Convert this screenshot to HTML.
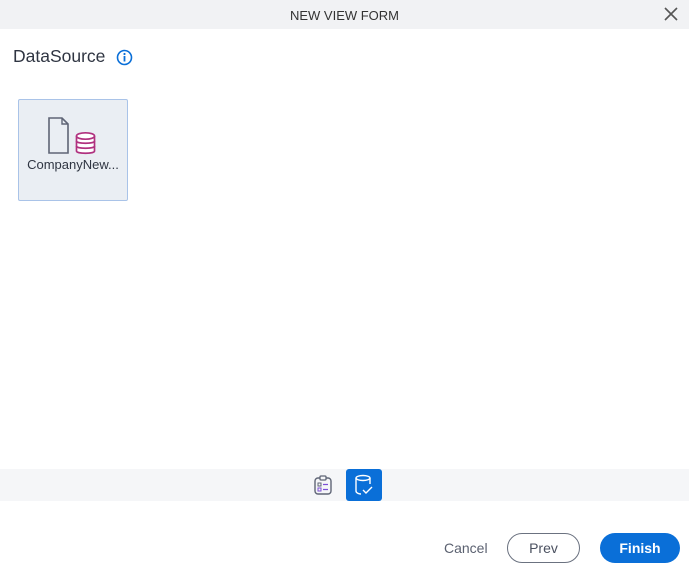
<!DOCTYPE html>
<html><head><style>
*{margin:0;padding:0;box-sizing:border-box}
body{width:689px;height:571px;background:#fff;font-family:"Liberation Sans",sans-serif;position:relative;overflow:hidden;color:#333}
.hdr{position:absolute;left:0;top:0;width:689px;height:29px;background:#f1f2f4;text-align:center;line-height:31px;font-size:13px;color:#333}
.x{position:absolute;right:11px;top:7px}
.title{position:absolute;left:13px;top:46px;font-size:17.5px;color:#2f3542}
.info{position:absolute;left:116px;top:49px}
.card{position:absolute;left:18px;top:99px;width:110px;height:102px;background:#eaeef3;border:1px solid #a9c3e8;border-radius:2px}
.card .lbl{position:absolute;left:0;width:108px;top:57px;text-align:center;font-size:13px;color:#2f3542}
.band{position:absolute;left:0;top:469px;width:689px;height:32px;background:#f5f6f8}
.act{position:absolute;left:346px;top:469px;width:36px;height:32px;background:#0a6fd8;border-radius:3px}
.cancel{position:absolute;left:444px;top:540px;font-size:14px;color:#5b6170}
.prev{position:absolute;left:507px;top:533px;width:73px;height:30px;border:1px solid #6b7280;border-radius:15px;text-align:center;line-height:28px;font-size:14px;color:#4b5160}
.fin{position:absolute;left:600px;top:533px;width:80px;height:30px;background:#0a6fd8;border-radius:15px;text-align:center;line-height:30px;font-size:14px;color:#fff;font-weight:bold}
</style></head><body>
<div class="hdr">NEW VIEW FORM</div>
<svg class="x" width="14" height="14" viewBox="0 0 14 14"><path d="M1 1L13 13M13 1L1 13" stroke="#555" stroke-width="1.6"/></svg>
<div class="title">DataSource</div>
<svg class="info" width="17" height="17" viewBox="0 0 17 17"><circle cx="8.5" cy="8.5" r="7" fill="none" stroke="#0a6fd8" stroke-width="1.6"/><circle cx="8.5" cy="5" r="1.1" fill="#0a6fd8"/><rect x="7.6" y="7" width="1.8" height="5.5" fill="#0a6fd8"/></svg>
<div class="card">
<svg style="position:absolute;left:29px;top:17px" width="50" height="40" viewBox="0 0 50 40"><path d="M1 1H14L20 7V36H1Z" fill="none" stroke="#5f6576" stroke-width="1.6"/><path d="M14 1V7H20" fill="none" stroke="#5f6576" stroke-width="1.4"/><g fill="#fff" stroke="#b0317f" stroke-width="1.7"><path d="M28.5 19V34c0 3 18 3 18 0V19"/><ellipse cx="37.5" cy="19" rx="9" ry="3.2"/><path d="M28.5 24c0 3 18 3 18 0M28.5 29c0 3 18 3 18 0" fill="none"/></g></svg>
<div class="lbl">CompanyNew...</div>
</div>
<div class="band"></div>
<svg style="position:absolute;left:313px;top:475px" width="20" height="20" viewBox="0 0 20 20"><rect x="2" y="3" width="16" height="16" rx="3" fill="none" stroke="#5f6576" stroke-width="1.4"/><rect x="7" y="1" width="6" height="4" rx="1" fill="#f5f6f8" stroke="#5f6576" stroke-width="1.3"/><rect x="5" y="8" width="3" height="3" fill="none" stroke="#5f6576" stroke-width="1"/><rect x="5" y="13" width="3" height="3" fill="none" stroke="#7b4fd6" stroke-width="1"/><path d="M10 9.5h5M10 14.5h5" stroke="#7b4fd6" stroke-width="1.3"/></svg>
<div class="act"><svg style="position:absolute;left:8px;top:5px" width="20" height="22" viewBox="0 0 20 22"><ellipse cx="9" cy="4" rx="7" ry="2.5" fill="none" stroke="#fff" stroke-width="1.4"/><path d="M2 4v13c0 2 3 3 5 3M16 4v6" fill="none" stroke="#fff" stroke-width="1.4"/><path d="M9 16l3 3 6-6" fill="none" stroke="#fff" stroke-width="1.4"/></svg></div>
<div class="cancel">Cancel</div>
<div class="prev">Prev</div>
<div class="fin">Finish</div>
</body></html>
